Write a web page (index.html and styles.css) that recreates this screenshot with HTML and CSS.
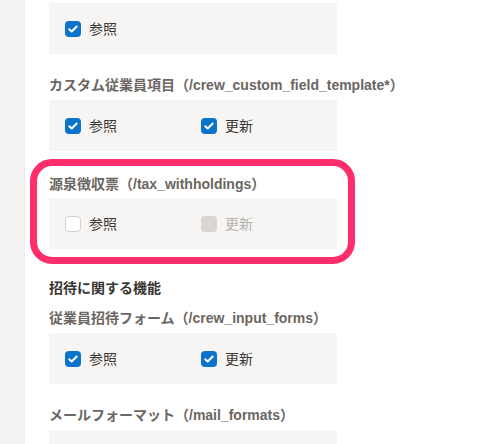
FILE: index.html
```html
<!DOCTYPE html>
<html lang="ja">
<head>
<meta charset="utf-8">
<link rel="stylesheet" href="styles.css">
</head>
<body>
<div class="page">
  <div class="side"></div>
  <main class="panel">
    <section class="perm first">
      <div class="opts">
        <label class="opt"><span class="cb on"><svg viewBox="0 0 16 16"><path d="M4.3 8.2l2.4 2.3 5-5" /></svg></span>参照</label>
      </div>
    </section>
    <section class="perm">
      <h3 class="perm-title">カスタム従業員項目（/crew_custom_field_template*）</h3>
      <div class="opts">
        <label class="opt"><span class="cb on"><svg viewBox="0 0 16 16"><path d="M4.3 8.2l2.4 2.3 5-5" /></svg></span>参照</label>
        <label class="opt"><span class="cb on"><svg viewBox="0 0 16 16"><path d="M4.3 8.2l2.4 2.3 5-5" /></svg></span>更新</label>
      </div>
    </section>
    <section class="perm marked">
      <h3 class="perm-title">源泉徴収票（/tax_withholdings）</h3>
      <div class="opts">
        <label class="opt"><span class="cb off"></span>参照</label>
        <label class="opt disabled"><span class="cb dis"></span>更新</label>
      </div>
      <div class="mark"></div>
    </section>
    <h2 class="group">招待に関する機能</h2>
    <section class="perm">
      <h3 class="perm-title">従業員招待フォーム（/crew_input_forms）</h3>
      <div class="opts">
        <label class="opt"><span class="cb on"><svg viewBox="0 0 16 16"><path d="M4.3 8.2l2.4 2.3 5-5" /></svg></span>参照</label>
        <label class="opt"><span class="cb on"><svg viewBox="0 0 16 16"><path d="M4.3 8.2l2.4 2.3 5-5" /></svg></span>更新</label>
      </div>
    </section>
    <section class="perm">
      <h3 class="perm-title">メールフォーマット（/mail_formats）</h3>
      <div class="opts"></div>
    </section>
  </main>
</div>
</body>
</html>
```
FILE: styles.css
```css
html, body {
  margin: 0;
  padding: 0;
  height: 100%;
  overflow: hidden;
  background: #f4f3f2;
  font-family: "Liberation Sans", "Noto Sans CJK JP", sans-serif;
}
.page {
  display: flex;
  height: 100%;
}
.side {
  width: 25px;
  flex: none;
  background: #f4f3f2;
}
.panel {
  flex: 1;
  background: #fff;
  box-shadow: 0 0 3px rgba(0,0,0,0.08);
  padding: 3px 0 0 24px;
  display: flex;
  flex-direction: column;
}
.perm {
  position: relative;
  width: 288px;
  margin-bottom: 21px;
}
.perm.marked {
  margin-top: 2px;
  margin-bottom: 29px;
}
.perm-title {
  margin: 0 0 5px;
  font-size: 14px;
  line-height: 20px;
  font-weight: 700;
  color: #6b6661;
  white-space: nowrap;
}
.marked .perm-title { margin-bottom: 4px; }
.opts {
  height: 51px;
  background: #f6f5f4;
  display: flex;
  align-items: center;
  padding-left: 16px;
  box-sizing: border-box;
}
.opt {
  width: 136px;
  display: flex;
  align-items: center;
  gap: 8px;
  font-size: 14px;
  color: #3a3633;
  line-height: 16px;
}
.opt.disabled { color: #b5b1ad; }
.cb {
  width: 16px;
  height: 16px;
  box-sizing: border-box;
  border-radius: 4px;
  flex: none;
  display: flex;
}
.cb svg { width: 16px; height: 16px; }
.cb svg path {
  fill: none;
  stroke: #fff;
  stroke-width: 2;
  stroke-linecap: round;
  stroke-linejoin: round;
}
.cb.on { background: #0a74cc; }
.cb.off { background: #fff; border: 1px solid #d3d0cd; }
.cb.dis { background: #d9d6d3; }
.group {
  margin: 0 0 10px;
  font-size: 14px;
  line-height: 20px;
  font-weight: 700;
  color: #3a3633;
}
.mark {
  position: absolute;
  left: -19px;
  top: -15px;
  width: 325px;
  height: 105px;
  box-sizing: border-box;
  border: 7px solid #ff2d6c;
  border-radius: 22px;
  pointer-events: none;
}
```
